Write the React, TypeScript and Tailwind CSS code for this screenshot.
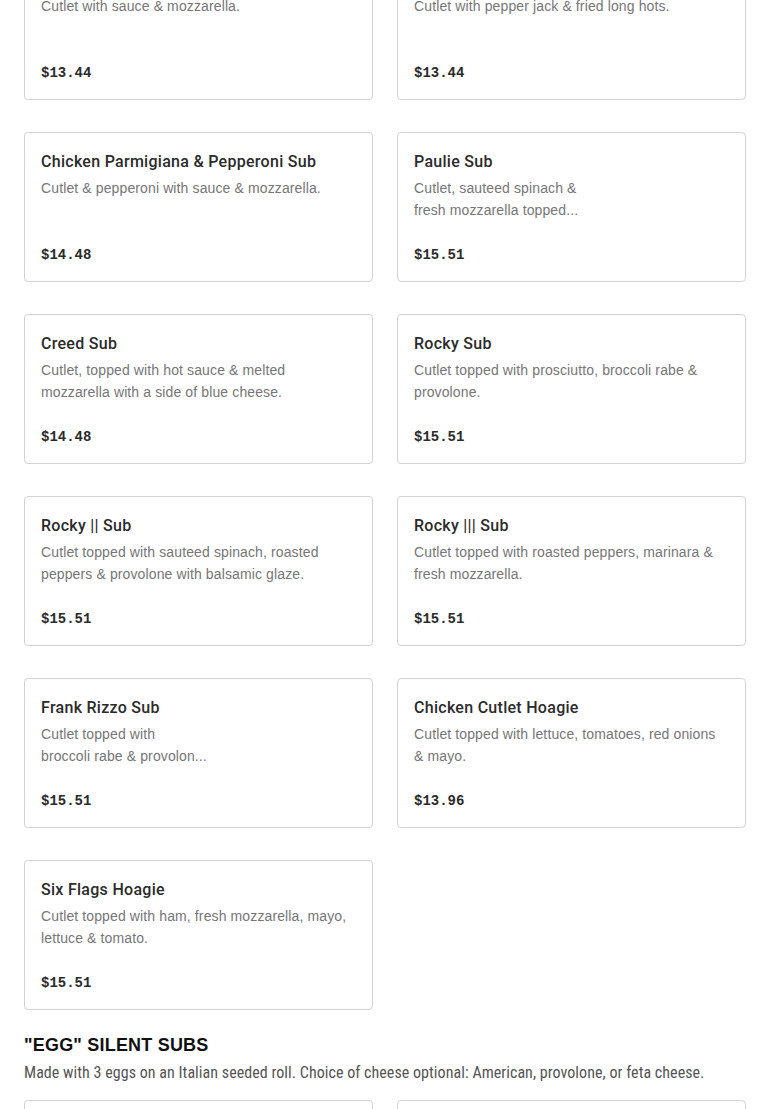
import React from "react";

type Item = { name: string; desc: React.ReactNode; price: string };

const items: Item[] = [
  { name: "Chicken Parmigiana Sub", desc: "Cutlet with sauce & mozzarella.", price: "$13.44" },
  { name: "Chicken Cutlet Sub", desc: "Cutlet with pepper jack & fried long hots.", price: "$13.44" },
  { name: "Chicken Parmigiana & Pepperoni Sub", desc: "Cutlet & pepperoni with sauce & mozzarella.", price: "$14.48" },
  {
    name: "Paulie Sub",
    desc: (
      <>
        Cutlet, sauteed spinach &amp;
        <br />
        fresh mozzarella topped...
      </>
    ),
    price: "$15.51",
  },
  {
    name: "Creed Sub",
    desc: (
      <>
        Cutlet, topped with hot sauce &amp; melted
        <br />
        mozzarella with a side of blue cheese.
      </>
    ),
    price: "$14.48",
  },
  {
    name: "Rocky Sub",
    desc: (
      <>
        Cutlet topped with prosciutto, broccoli rabe &amp;
        <br />
        provolone.
      </>
    ),
    price: "$15.51",
  },
  {
    name: "Rocky || Sub",
    desc: (
      <>
        Cutlet topped with sauteed spinach, roasted
        <br />
        peppers &amp; provolone with balsamic glaze.
      </>
    ),
    price: "$15.51",
  },
  {
    name: "Rocky ||| Sub",
    desc: (
      <>
        Cutlet topped with roasted peppers, marinara &amp;
        <br />
        fresh mozzarella.
      </>
    ),
    price: "$15.51",
  },
  {
    name: "Frank Rizzo Sub",
    desc: (
      <>
        Cutlet topped with
        <br />
        broccoli rabe &amp; provolon...
      </>
    ),
    price: "$15.51",
  },
  {
    name: "Chicken Cutlet Hoagie",
    desc: (
      <>
        Cutlet topped with lettuce, tomatoes, red onions
        <br />
        &amp; mayo.
      </>
    ),
    price: "$13.96",
  },
  {
    name: "Six Flags Hoagie",
    desc: (
      <>
        Cutlet topped with ham, fresh mozzarella, mayo,
        <br />
        lettuce &amp; tomato.
      </>
    ),
    price: "$15.51",
  },
];

function Card({ item }: { item?: Item }) {
  return (
    <div className="h-[150px] rounded-[4px] border border-[#d3d3d3] bg-white px-4 pt-[17px] pb-4 flex flex-col">
      {item && (
        <>
          <div className="text-[16px] leading-6 font-medium text-[#2b2b2b] font-['Roboto',sans-serif] tracking-[0.28px] whitespace-nowrap">
            {item.name}
          </div>
          <div className="mt-[3px] text-[14px] leading-[22px] text-[#767676] font-['Liberation_Sans',sans-serif] tracking-[0.12px] whitespace-nowrap">
            {item.desc}
          </div>
          <div className="mt-auto text-[14px] leading-5 font-bold text-[#2b2b2b] font-['Liberation_Mono',monospace]">
            {item.price}
          </div>
        </>
      )}
    </div>
  );
}

export default function App() {
  return (
    <div className="min-h-[1109px] bg-white overflow-hidden">
      <div className="px-6 -mt-[50px]">
        <div className="grid grid-cols-2 gap-x-6 gap-y-8">
          {items.map((it) => (
            <Card key={it.name} item={it} />
          ))}
        </div>
        <h2 className="mt-6 text-[18px] leading-[22px] font-bold uppercase text-[#111] font-['Liberation_Sans',sans-serif] tracking-[0.2px]">
          "Egg" Silent Subs
        </h2>
        <p className="mt-[7px] text-[16px] leading-5 text-[#555] font-['Roboto_Condensed','Liberation_Sans_Narrow',sans-serif] tracking-[0.05px]">
          Made with 3 eggs on an Italian seeded roll. Choice of cheese optional: American, provolone, or feta cheese.
        </p>
        <div className="mt-[17px] grid grid-cols-2 gap-x-6 gap-y-8">
          <Card />
          <Card />
        </div>
      </div>
    </div>
  );
}
